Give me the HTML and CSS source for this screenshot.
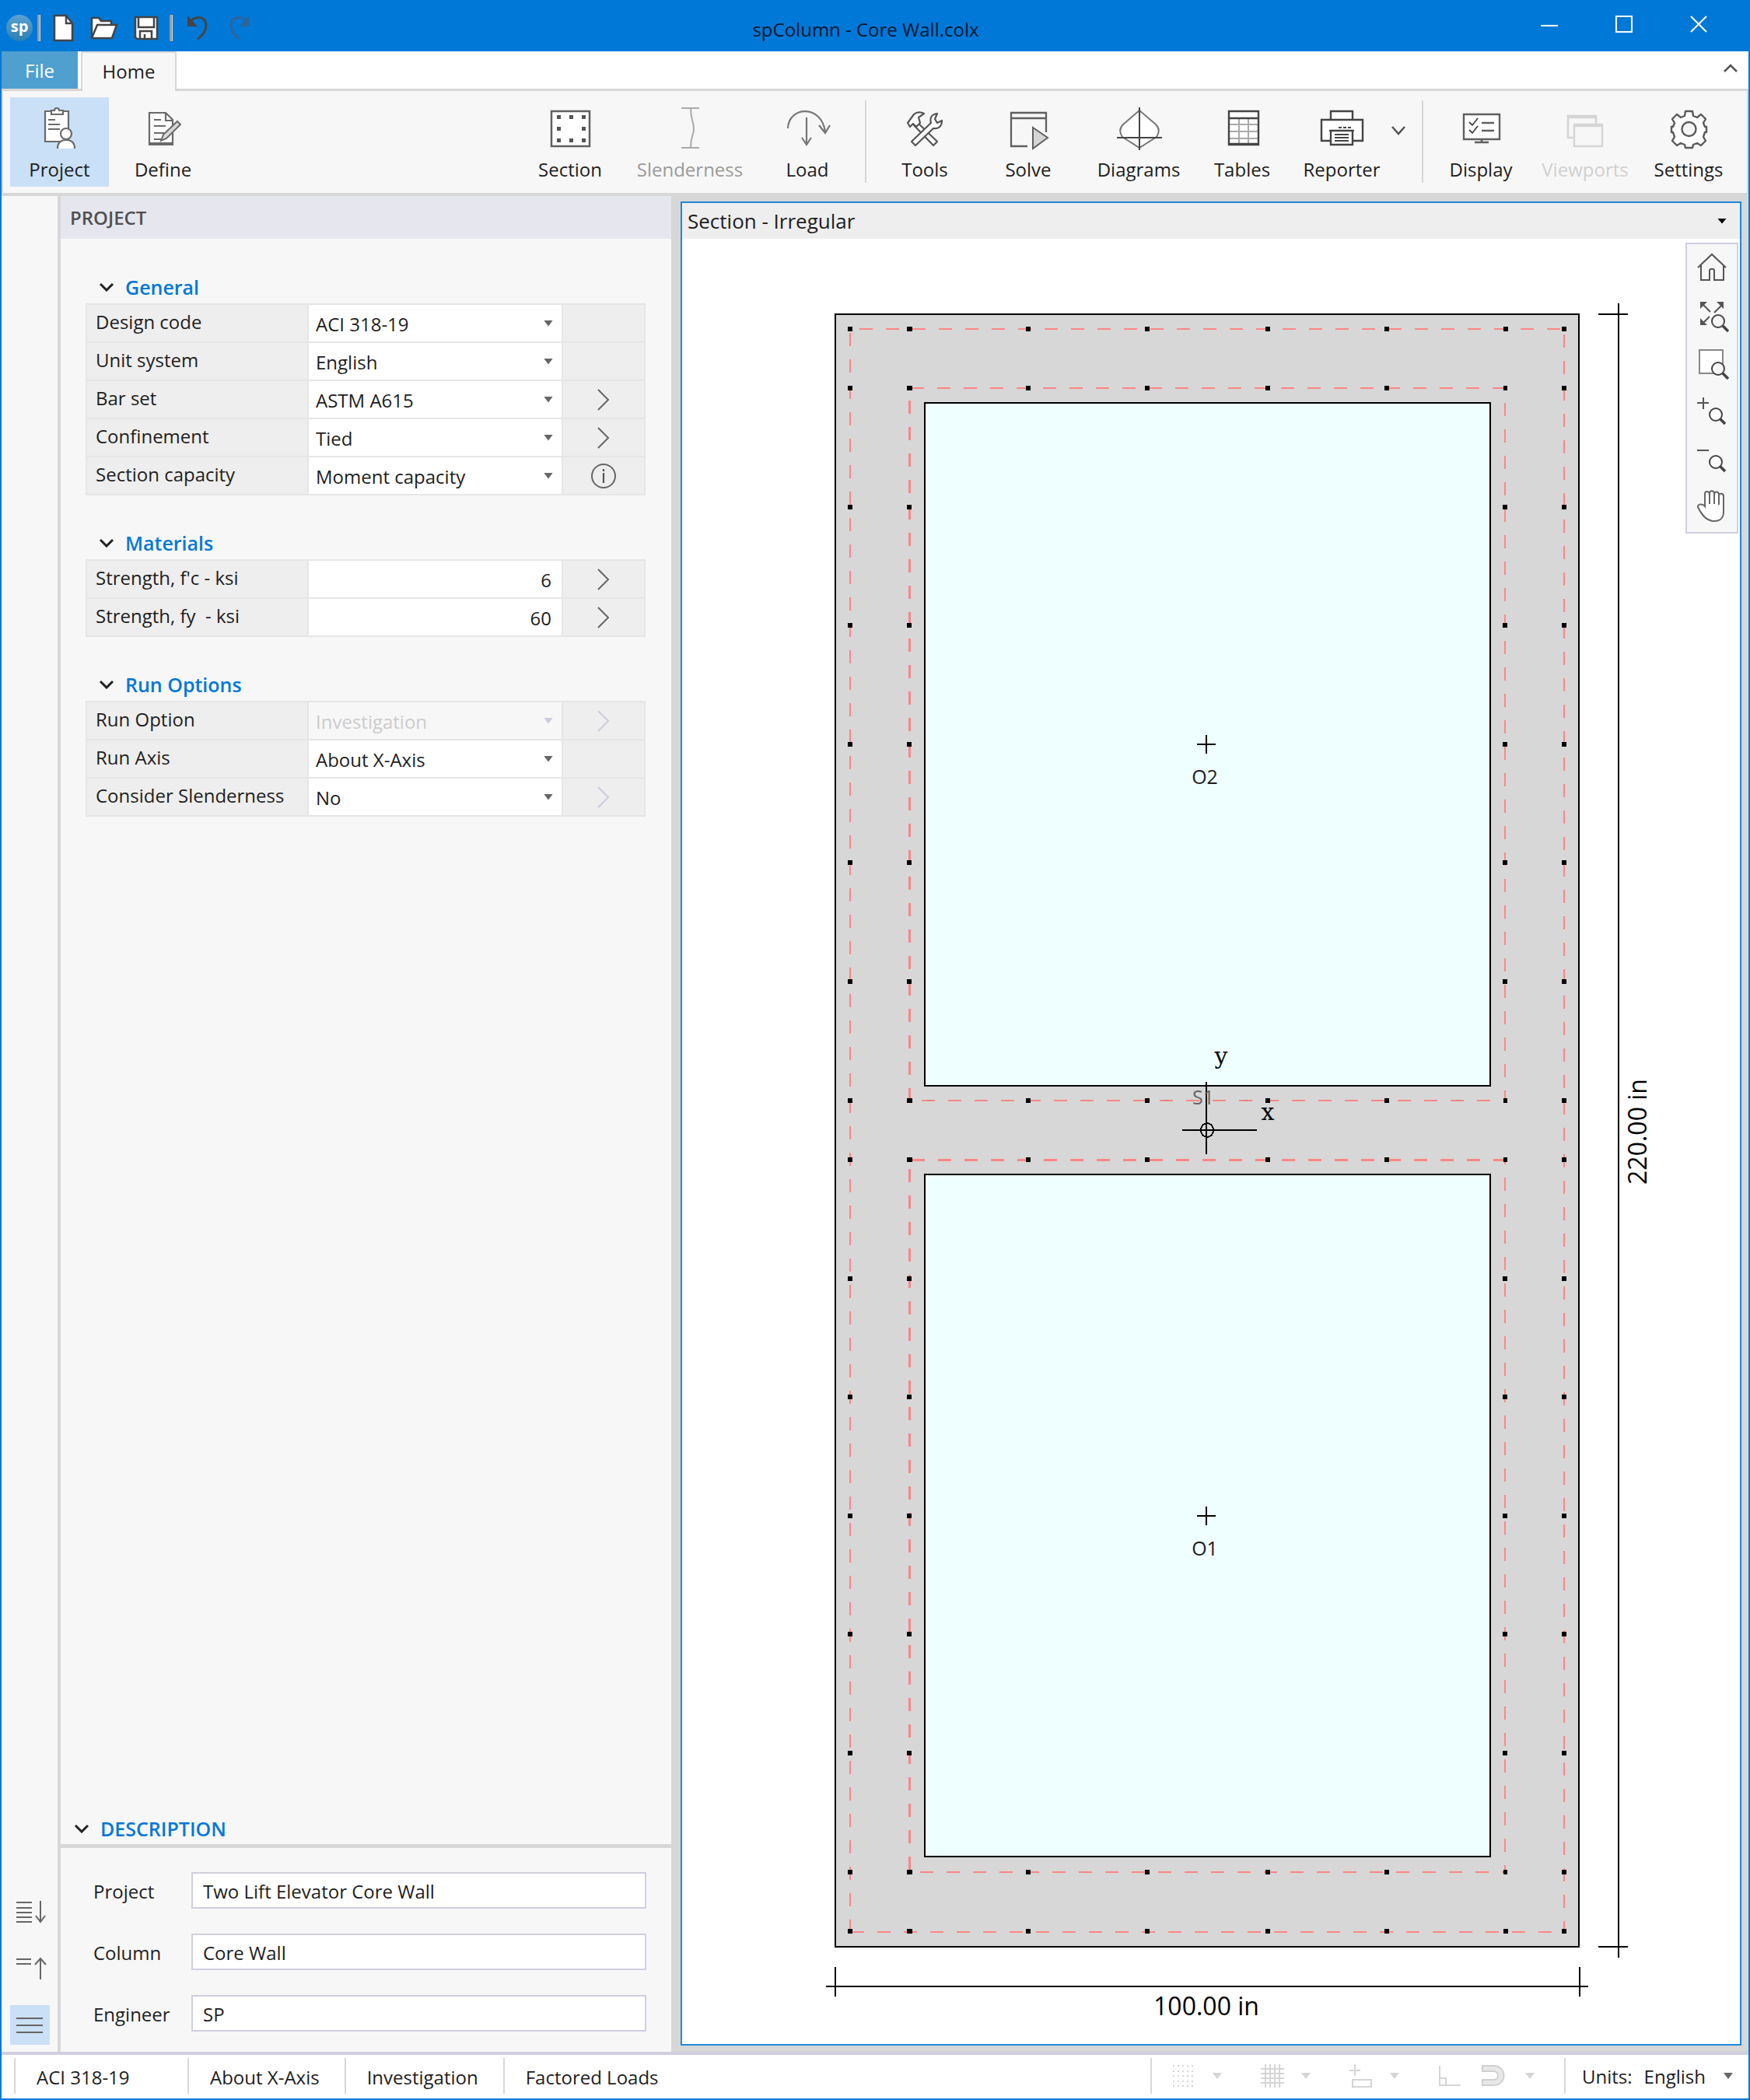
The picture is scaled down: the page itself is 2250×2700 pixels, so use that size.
FILE: index.html
```html
<!DOCTYPE html>
<html lang="en">
<head>
<meta charset="utf-8">
<title>spColumn - Core Wall.colx</title>
<link rel="stylesheet" href="styles.css">
</head>
<body>
<div class="app">
  <header class="titlebar">
    <div class="quick">
      <svg class="logo" width="34" height="34" viewBox="0 0 34 34"><defs><linearGradient id="lg" x1="0" y1="0" x2="0" y2="1"><stop offset="0" stop-color="#5aa2d2"/><stop offset="1" stop-color="#2a7fb4"/></linearGradient></defs><circle cx="17" cy="17" r="17" fill="url(#lg)"/><text x="17" y="22" text-anchor="middle" class="logo-text">sp</text></svg>
      <span class="quick-sep"></span>
      <button class="icon-btn" aria-label="New"><svg width="28" height="36" viewBox="0 0 28 36"><path d="M2 2h15l8 10v22H2z" fill="#fff" stroke="#444" stroke-width="2.5"/><path d="M17 2v10h8" fill="none" stroke="#444" stroke-width="2.5"/></svg></button>
      <button class="icon-btn" aria-label="Open"><svg width="36" height="30" viewBox="0 0 36 30"><path d="M2 28V2h9l3 4h13v5" fill="#fff" stroke="#444" stroke-width="2.5"/><path d="M2 28L9 11h25l-6 17z" fill="#fff" stroke="#444" stroke-width="2.5"/></svg></button>
      <button class="icon-btn" aria-label="Save"><svg width="32" height="32" viewBox="0 0 32 32"><path d="M2 2h28v28H4l-2-2z" fill="#fff" stroke="#444" stroke-width="2.5"/><path d="M6 2v13h20V2M8 30V20h15v10M14 30v-6" fill="none" stroke="#444" stroke-width="2.5"/></svg></button>
      <span class="quick-sep history-sep"></span>
      <button class="icon-btn" aria-label="Undo"><svg width="28" height="34" viewBox="0 0 28 34"><path d="M3 10C12 0 24 2 25 13c0 8-5 14-11 18" fill="none" stroke="#444" stroke-width="3"/><path d="M1 1v14h13z" fill="#444"/></svg></button>
      <button class="icon-btn redo" aria-label="Redo" disabled><svg width="28" height="34" viewBox="0 0 28 34"><path d="M25 10C16 0 4 2 3 13c0 8 5 14 11 18" fill="none" stroke="#2c659a" stroke-width="3"/><path d="M27 1v14H14z" fill="#2c659a"/></svg></button>
    </div>
    <h1 class="app-title">spColumn - Core Wall.colx</h1>
    <div class="window-buttons">
      <button aria-label="Minimize"><svg width="22" height="22" viewBox="0 0 22 22"><path d="M0 13h22" stroke="#fff" stroke-width="2"/></svg></button>
      <button aria-label="Maximize"><svg width="22" height="22" viewBox="0 0 22 22"><path d="M1 1h20v20H1z" fill="none" stroke="#fff" stroke-width="2"/></svg></button>
      <button aria-label="Close"><svg width="22" height="22" viewBox="0 0 22 22"><path d="M1 1l20 20M21 1L1 21" stroke="#fff" stroke-width="2"/></svg></button>
    </div>
  </header>

  <nav class="tabs">
    <button class="tab tab-file">File</button>
    <button class="tab tab-home">Home</button>
    <button class="collapse" aria-label="Collapse ribbon"><svg width="20" height="12" viewBox="0 0 20 12"><path d="M2 10l8-8 8 8" fill="none" stroke="#555" stroke-width="2.5"/></svg></button>
  </nav>

  <div class="ribbon">
    <div class="group group-start">
      <button class="tool active"><svg viewBox="0 0 60 60"><g fill="#fff" stroke="#6a6a6a" stroke-width="2.2"><path d="M11 7h30v39H11z"/><path d="M19 11V6h4c0-4 6-4 6 0h5v5z"/><path d="M15 18h9M15 24h15M15 30h15" /><path d="M27 55c0-8 5-11 11-11s11 3 11 11"/><circle cx="38" cy="36" r="7"/></g></svg><span>Project</span></button>
      <button class="tool"><svg viewBox="0 0 60 60"><path d="M12 9h21l9 9v32H12z" fill="#fff" stroke="#6a6a6a" stroke-width="2.2"/><path d="M33 9v10h9M18 18h9M18 26h15M18 35h13M18 43h9M12 48h30" fill="none" stroke="#6a6a6a" stroke-width="2.2"/><path d="M27 45l3-8 18-17 4 4-18 18z" fill="#d8d8d8" stroke="#6a6a6a" stroke-width="2"/></svg><span>Define</span></button>
    </div>
    <div class="group group-model">
      <button class="tool"><svg viewBox="0 0 60 60"><path d="M6 7h49v45H6z" fill="#fff" stroke="#606060" stroke-width="2.5"/><path d="M13 12h5v5h-5zM29 12h5v5h-5zM45 12h5v5h-5zM13 27h5v5h-5zM45 27h5v5h-5zM13 42h5v5h-5zM29 42h5v5h-5zM45 42h5v5h-5z" fill="#555"/></svg><span>Section</span></button>
      <button class="tool" disabled><svg viewBox="0 0 60 60"><path d="M19 3h23M19 54h23M31 3c0 16 4 16 4 27 0 8-4 8-4 24" fill="none" stroke="#aaa" stroke-width="2"/></svg><span>Slenderness</span></button>
      <button class="tool"><svg viewBox="0 0 60 60"><path d="M5 29C6 0 49-2 53 34M45 25l8 10 6-10M29 15v35M23 41l6 9 6-9" fill="none" stroke="#777" stroke-width="2.2"/></svg><span>Load</span></button>
    </div>
    <div class="group group-run">
      <button class="tool"><svg viewBox="0 0 60 60"><g fill="#fff" stroke="#555" stroke-width="2.2" stroke-linejoin="round"><path d="M20 21l26 25-5 5-25-26z"/><path d="M8 22l8-11c5-4 9-3 13-1l-7 5 2 7-5 5-4-4-4 4z"/><path d="M13 46l25-24c-2-7 1-11 8-12l-3 7 3 5 6-3c0 8-5 11-11 10L18 51z"/></g></svg><span>Tools</span></button>
      <button class="tool"><svg viewBox="0 0 60 60"><path d="M29 52H8V9h45v25M8 16h45" fill="none" stroke="#606060" stroke-width="2.3"/><path d="M36 28l19 13-19 14z" fill="#d5d5d5" stroke="#606060" stroke-width="2"/></svg><span>Solve</span></button>
      <button class="tool"><svg viewBox="0 0 60 60"><path d="M31 6L10 24c-5 5-5 10-1 16l22 14 22-14c4-6 4-11-1-16z" fill="#fff" stroke="#777" stroke-width="2"/><path d="M31 2v55M2 41h58" stroke="#444" stroke-width="2"/></svg><span>Diagrams</span></button>
      <button class="tool"><svg viewBox="0 0 60 60"><path d="M13 7h38v43H13z" fill="#fff"/><path d="M13 24h38M13 33h38M13 42h38M26 16v34M38 16v34" stroke="#aaa" stroke-width="2"/><path d="M13 7h38v43H13zM13 16h38M13 49h38" fill="none" stroke="#444" stroke-width="2.4"/></svg><span>Tables</span></button>
      <button class="tool tool-reporter"><svg viewBox="0 0 60 60"><g fill="#fff" stroke="#444" stroke-width="2.4"><path d="M16 7h28v14H16z"/><path d="M4 18h53v27H4z"/><path d="M16 32h28v18H16z"/></g><path d="M14 32h32M21 37h18M21 41h18M21 45h18" stroke="#444" stroke-width="2.2"/><path d="M26 28h16" stroke="#444" stroke-width="2" stroke-dasharray="4 2"/></svg><span>Reporter</span></button>
      <button class="drop" aria-label="Reporter options"><svg width="20" height="13" viewBox="0 0 20 13"><path d="M2 2l8 9 8-9" fill="none" stroke="#555" stroke-width="2.5"/></svg></button>
    </div>
    <div class="group group-view">
      <button class="tool"><svg viewBox="0 0 60 60"><path d="M8 11h46v32H8z" fill="#fff" stroke="#606060" stroke-width="2.4"/><path d="M31 43v4M22 47h18M31 22h16M31 32h16" stroke="#606060" stroke-width="2.6"/><path d="M15 21l4 4 7-9M15 31l4 4 7-9" fill="none" stroke="#444" stroke-width="1.8"/></svg><span>Display</span></button>
      <button class="tool" disabled><svg viewBox="0 0 60 60"><path d="M17 41H8V13h36v10M8 15h36" fill="none" stroke="#d5d5d5" stroke-width="2.6"/><path d="M16 24h36v28H16zM16 26h36" fill="none" stroke="#d5d5d5" stroke-width="2.4"/></svg><span class="faint">Viewports</span></button>
      <button class="tool"><svg viewBox="0 0 60 60"><path d="M26 7h9l1 6 5 2 5-4 6 6-3 5 2 5 2 0v7l-2 0-2 6 3 5-6 6-5-3-5 2-1 4h-9l-1-4-5-2-5 3-6-6 3-5-2-6-2 0v-7l2 0 2-5-3-5 6-6 5 4 5-2z" fill="#fff" stroke="#5a5a5a" stroke-width="2.4" stroke-linejoin="round"/><circle cx="30.500" cy="30" r="9" fill="#f7f7f7" stroke="#5a5a5a" stroke-width="2.4"/></svg><span>Settings</span></button>
    </div>
  </div>

  <main class="workspace">
    <aside class="rail">
      <button aria-label="Expand all"><svg width="40" height="30" viewBox="0 0 40 30"><path d="M0 3h20M0 10h20M0 16h20M0 22h20M0 28h20" stroke="#666" stroke-width="2"/><path d="M31 1v27M25 20l6 8 6-8" fill="none" stroke="#666" stroke-width="2"/></svg></button>
      <button aria-label="Collapse all"><svg width="40" height="30" viewBox="0 0 40 30"><path d="M0 3h19M0 9h19" stroke="#666" stroke-width="2"/><path d="M31 29V2M24 10l7-8 7 8" fill="none" stroke="#666" stroke-width="2"/></svg></button>
      <button class="active" aria-label="Show all"><svg width="34" height="20" viewBox="0 0 34 20"><path d="M0 1h34M0 10h34M0 19h34" stroke="#666" stroke-width="2"/></svg></button>
    </aside>

    <section class="panel">
      <h2 class="panel-title">PROJECT</h2>
      <div class="panel-body">
        <h3 class="section-title"><svg class="chev" viewBox="0 0 20 12"><path d="M2 2l8 8 8-8"/></svg>General</h3>
        <div class="props">
          <label for="code">Design code</label><div class="pick"><select id="code"><option>ACI 318-19</option></select><i></i></div><span class="cell"></span>
          <label for="units">Unit system</label><div class="pick"><select id="units"><option>English</option></select><i></i></div><span class="cell"></span>
          <label for="bars">Bar set</label><div class="pick"><select id="bars"><option>ASTM A615</option></select><i></i></div><button class="cell" aria-label="Bar set details"><svg class="more" viewBox="0 0 18 30"><path d="M2 2l13 13L2 28"/></svg></button>
          <label for="conf">Confinement</label><div class="pick"><select id="conf"><option>Tied</option></select><i></i></div><button class="cell" aria-label="Confinement details"><svg class="more" viewBox="0 0 18 30"><path d="M2 2l13 13L2 28"/></svg></button>
          <label for="cap">Section capacity</label><div class="pick"><select id="cap"><option>Moment capacity</option></select><i></i></div><button class="cell" aria-label="About section capacity"><svg width="34" height="34" viewBox="0 0 34 34"><circle cx="17" cy="17" r="15" fill="none" stroke="#666" stroke-width="2"/><path d="M17 8v3M17 13v13" stroke="#555" stroke-width="2.2"/></svg></button>
        </div>

        <h3 class="section-title"><svg class="chev" viewBox="0 0 20 12"><path d="M2 2l8 8 8-8"/></svg>Materials</h3>
        <div class="props">
          <label for="fc">Strength, f'c - ksi</label><input id="fc" value="6"><button class="cell" aria-label="Concrete details"><svg class="more" viewBox="0 0 18 30"><path d="M2 2l13 13L2 28"/></svg></button>
          <label for="fy">Strength, fy&nbsp; - ksi</label><input id="fy" value="60"><button class="cell" aria-label="Steel details"><svg class="more" viewBox="0 0 18 30"><path d="M2 2l13 13L2 28"/></svg></button>
        </div>

        <h3 class="section-title"><svg class="chev" viewBox="0 0 20 12"><path d="M2 2l8 8 8-8"/></svg>Run Options</h3>
        <div class="props">
          <label for="run">Run Option</label><div class="pick off"><select id="run" disabled><option>Investigation</option></select><i></i></div><button class="cell" disabled aria-label="Run option details"><svg class="more" viewBox="0 0 18 30"><path d="M2 2l13 13L2 28"/></svg></button>
          <label for="axis">Run Axis</label><div class="pick"><select id="axis"><option>About X-Axis</option></select><i></i></div><span class="cell"></span>
          <label for="slen">Consider Slenderness</label><div class="pick"><select id="slen"><option>No</option></select><i></i></div><button class="cell" disabled aria-label="Slenderness details"><svg class="more" viewBox="0 0 18 30"><path d="M2 2l13 13L2 28"/></svg></button>
        </div>
      </div>
      <h2 class="desc-title"><svg class="chev" viewBox="0 0 20 12"><path d="M2 2l8 8 8-8"/></svg>DESCRIPTION</h2>
      <div class="desc">
        <label for="d-project">Project</label><input id="d-project" value="Two Lift Elevator Core Wall">
        <label for="d-column">Column</label><input id="d-column" value="Core Wall">
        <label for="d-engineer">Engineer</label><input id="d-engineer" value="SP">
      </div>
    </section>

    <section class="viewport">
      <header class="viewport-head"><h2>Section - Irregular</h2><button aria-label="Viewport menu"><i></i></button></header>
      <div class="canvas">
        <svg class="drawing" viewBox="877 307 1360 2321">
          <path d="M1074 404H2030V2503H1074z" fill="#d7d7d7" stroke="#000" stroke-width="2"/>
          <path d="M1189 518H1916V1396H1189zM1189 1510H1916V2387H1189z" fill="#efffff" stroke="#000" stroke-width="2"/>
          <g class="cover">
            <path d="M1105 423H2011"/><path d="M1093 428V2483"/><path d="M2011 430V2483"/><path d="M1094 2484H2011"/>
            <path d="M1171 499H1935"/><path d="M1169 515V1415" stroke-width="3"/><path d="M1935 518V1415"/><path d="M1185 1415H1935"/>
            <path d="M1172 1491H1935" stroke-width="3"/><path d="M1169 1503V2407" stroke-width="3"/><path d="M1935 1491V2407" stroke-dashoffset="11"/><path d="M1183 2407H1935"/>
          </g>
          <g class="rebar">
            <path d="M1090 423H2014" stroke-dasharray="6 70 7 146 6 147 6 149 6 147 6 147 6 69 6"/>
            <path d="M1090 2483H2014" stroke-dasharray="6 70 7 146 6 147 6 149 6 147 6 147 6 69 6"/>
            <path d="M1166 499H1938M1166 1415H1938M1166 1491H1938M1166 2407H1938" stroke-dasharray="7 146 6 147 6 149 6 147 6 147 6 999"/>
            <path d="M1093 496V2410M2011 496V2410" stroke-dasharray="6 147 6 146 6 147 6 146 6 147 6 147 6 70 6 147 6 146 6 147 6 146 6 147 6 147 6 999"/>
            <path d="M1169 649V1265M1935 649V1265M1169 1641V2257M1935 1641V2257" stroke-dasharray="6 146 6 147 6 146 6 147 6 999"/>
          </g>
          <g class="ink">
            <path d="M1539 957h24M1551 945v24M1539 1949h24M1551 1937v24"/>
            <path d="M1551 1391V1484M1520 1453H1616"/><ellipse cx="1552" cy="1453" rx="8" ry="9"/>
            <path d="M2081 390V2517M2055 404H2093M2055 2503H2093"/>
            <path d="M1062 2554H2042M1074 2529V2567M2031 2529V2567"/>
          </g>
          <g class="mark" text-anchor="middle">
            <text x="1549" y="1008">O2</text><text x="1549" y="2000">O1</text>
            <text x="1547" y="1420" fill="#666">S1</text>
          </g>
          <g class="axis" text-anchor="middle"><text x="1570" y="1368">y</text><text x="1630" y="1440">x</text></g>
          <g class="dim" text-anchor="middle"><text x="1551" y="2591">100.00 in</text><text transform="translate(2117 1455) rotate(-90)">220.00 in</text></g>
        </svg>
        <div class="view-tools">
          <button aria-label="Home"><svg viewBox="0 0 44 44"><path d="M4 21L22 4l18 17M8 18v19h11V25c0-3 6-3 6 0v12h12V18" fill="none" stroke="#555" stroke-width="2"/></svg></button>
          <button aria-label="Zoom extents"><svg viewBox="0 0 44 44"><path d="M10 7l10 10M36 7L25 18M9 33l10-10" stroke="#555" stroke-width="2"/><path d="M7 4h9l-9 9zM37 4h-9l9 9zM7 34v-9l9 9z" fill="#555"/><circle cx="30" cy="29" r="8" fill="#f7f7f7" stroke="#444" stroke-width="2"/><path d="M36 35l7 7" stroke="#444" stroke-width="3.500"/></svg></button>
          <button aria-label="Zoom window"><svg viewBox="0 0 44 44"><path d="M6 5h30v30H6z" fill="#fff" stroke="#888" stroke-width="2"/><circle cx="30" cy="29" r="8" fill="#f7f7f7" stroke="#444" stroke-width="2"/><path d="M36 35l7 7" stroke="#444" stroke-width="3.500"/></svg></button>
          <button aria-label="Zoom in"><svg viewBox="0 0 44 44"><path d="M3 12h15M11 5v15" stroke="#555" stroke-width="2"/><circle cx="27" cy="27" r="8" fill="#fff" stroke="#444" stroke-width="2"/><path d="M32 32l7 7" stroke="#444" stroke-width="3.500"/></svg></button>
          <button aria-label="Zoom out"><svg viewBox="0 0 44 44"><path d="M3 12h15" stroke="#555" stroke-width="2"/><circle cx="27" cy="27" r="8" fill="#fff" stroke="#444" stroke-width="2"/><path d="M32 32l7 7" stroke="#444" stroke-width="3.500"/></svg></button>
          <button aria-label="Pan"><svg viewBox="0 0 44 44"><path d="M13 23V7c0-4 5-4 6 0 0-5 6-5 6 0 1-4 6-3 6 1 1-2 6-2 6 2v20c0 8-5 12-12 12-9 0-15-6-21-18-1-4 6-5 9-1z" fill="#fff" stroke="#666" stroke-width="2"/><path d="M19 6v14M25 6v14M31 8v13" stroke="#666" stroke-width="2"/></svg></button>
        </div>
      </div>
    </section>
  </main>

  <footer class="status">
    <span class="seg seg-code">ACI 318-19</span><span class="seg">About X-Axis</span><span class="seg">Investigation</span><span class="seg">Factored Loads</span>
    <div class="snap">
      <button disabled aria-label="Grid points"><svg viewBox="0 0 30 30"><path d="M1 2h28M1 9h28M1 15h28M1 22h28M1 28h28" stroke="#d5d5d5" stroke-width="2" stroke-dasharray="2 4"/></svg><i></i></button>
      <button disabled aria-label="Grid lines"><svg viewBox="0 0 30 30"><path d="M0 6h30M0 12h30M0 18h30M0 24h30M6 0v30M12 0v30M18 0v30M24 0v30" stroke="#d5d5d5" stroke-width="2"/></svg><i></i></button>
      <button disabled aria-label="Add shape"><svg viewBox="0 0 30 30"><path d="M0 8h14M7 0v15M4 20h24v9H4z" fill="none" stroke="#d5d5d5" stroke-width="2"/></svg><i></i></button>
      <button disabled class="snap-pair" aria-label="Ortho and snap"><svg viewBox="0 0 30 30"><path d="M2 2v25h27M2 18h8v9" fill="none" stroke="#d5d5d5" stroke-width="2"/></svg><svg viewBox="0 0 30 30"><path d="M1 2h14c18 0 18 25 0 25H1v-7h14c8 0 8-11 0-11H1z" fill="#e8e8e8" stroke="#d0d0d0" stroke-width="2"/></svg><i></i></button>
    </div>
    <div class="unit-pick"><label for="status-units">Units:</label><div class="pick"><select id="status-units"><option>English</option></select><i></i></div></div>
  </footer>
</div>
</body>
</html>
```
FILE: styles.css
```css
* { box-sizing: border-box; }
body {
  margin: 0;
  font: 24px/32px "Open Sans", "Noto Sans", sans-serif;
  color: #1e1e1e;
  background: #fff;
}
h1, h2, h3 { margin: 0; font-size: 24px; font-weight: 400; }
button, input, select { font: inherit; color: inherit; border: 0; padding: 0; margin: 0; background: none; border-radius: 0; }
svg { display: block; flex: none; }

.app {
  display: flex;
  flex-direction: column;
  min-height: 100vh;
  border: solid #0078d7;
  border-width: 0 2px 2px;
}

/* Title bar */
.titlebar {
  display: grid;
  grid-template-columns: 1fr auto 1fr;
  align-items: center;
  height: 66px;
  padding: 6px 16px 0 6px;
  background: #0078d7;
}
.quick { display: flex; align-items: center; gap: 20px; }
.quick-sep { width: 4px; height: 34px; background: #9a9a9a; border-right: 1px solid #d8d8d8; margin: 0 -4px 0 -14px; }
.history-sep { margin: 0 -2px 0 -6px; }
.redo { margin-left: 6px; }
.logo-text { font: 700 20px "Open Sans", sans-serif; fill: #fff; }
.app-title { color: #001830; padding: 4px 14px 0 0; }
.window-buttons { display: flex; justify-content: flex-end; padding-bottom: 10px; }
.window-buttons button { width: 96px; display: flex; justify-content: center; }

/* Tabs */
.tabs { display: flex; height: 51px; border-bottom: 3px solid #d7d7d7; }
.tab { height: 48px; padding-top: 2px; }
.tab-file { width: 98px; color: #fff; background: #4f9fcf; margin-right: 4px; }
.tab-home { width: 123px; height: 51px; padding-bottom: 3px; background: #f7f7f7; border: solid #d7d7d7; border-width: 2px 2px 0; }
.collapse { margin-left: auto; padding: 0 13px 4px; }

/* Ribbon */
.ribbon {
  display: flex;
  height: 135px;
  padding: 8px 2px 8px 9px;
  background: #f7f7f7;
  border: solid #d7d7d7;
  border-width: 0 2px 4px;
}
.group { display: grid; }
.group-start { grid-template-columns: 127px 127px; gap: 6px; }
.group-model { grid-template-columns: 154px 154px 148px; margin-left: auto; }
.group-run { grid-template-columns: 150px 116px 168px 98px 158px 24px; }
.group-view { grid-template-columns: 148px 120px 146px; }
.group-run, .group-view { position: relative; border-left: 2px solid transparent; }
.group-run::before, .group-view::before { content: ""; position: absolute; left: -2px; top: 4px; bottom: 5px; width: 2px; background: #d7d7d7; }
.tool { display: flex; flex-direction: column; align-items: center; gap: 6px; padding: 11px 0 6px; height: 115px; white-space: nowrap; }
.tool svg { width: 60px; height: 60px; }
.tool.active { background: #c9e0f7; }
.tool:disabled { color: #9a9a9a; }
.tool .faint { color: #d0d0d0; }
.tool-reporter { margin: 0 14px; }
.drop { display: flex; align-items: center; justify-content: flex-end; margin: 0 20px 30px -20px; }

/* Workspace */
.workspace { flex: 1; display: flex; background: #d7d7d7; }
.rail { width: 72px; display: flex; flex-direction: column; align-items: flex-start; justify-content: flex-end; gap: 22px; padding: 0 0 9px 11px; background: #f7f7f7; }
.rail button { width: 51px; height: 51px; display: flex; align-items: center; justify-content: flex-start; padding-left: 8px; }
.rail .active { background: #c9e0f7; }

.panel { width: 785px; margin: 0 12px 0 4px; display: flex; flex-direction: column; background: #f7f7f7; }
.panel-title { height: 55px; padding: 12px; color: #505050; background: #e6e6ef; font-weight: 600; }
.panel-body { flex: 1; padding: 0 33px 0 32px; }
.section-title { display: flex; align-items: center; gap: 14px; height: 42px; margin-top: 40px; padding-left: 17px; color: #0078d7; font-size: 25px; font-weight: 600; }
.section-title:first-child { margin-top: 41px; }
.chev { width: 20px; height: 12px; }
.chev path { fill: none; stroke: #222; stroke-width: 3; }
.props { display: grid; grid-template-columns: 283px 1fr 104px; grid-auto-rows: 47px; gap: 2px; padding: 2px; background: #e6e6e6; }
.props > label { padding: 6px 0 0 11px; background: #eee; white-space: nowrap; }
.props > input { min-width: 0; padding: 2px 13px 0 0; text-align: right; background: #fff; }
.cell { display: flex; align-items: center; justify-content: center; background: #eee; }
.more { width: 18px; height: 30px; }
.more path { fill: none; stroke: #666; stroke-width: 2; }
.cell:disabled .more path { stroke: #ccd; }

.pick { display: grid; align-items: center; background: #fff; }
.pick > * { grid-area: 1 / 1; }
.pick select { width: 100%; height: 100%; padding: 2px 30px 0 9px; appearance: none; opacity: 1; }
.pick i, .snap i { width: 12px; height: 8px; background: #666; clip-path: polygon(0 0, 100% 0, 50% 100%); pointer-events: none; }
.pick i { justify-self: end; margin-right: 11px; }
.pick.off { background: #f7f7f7; color: #ccc; }
.pick.off i { background: #ccd; }

.desc-title { display: flex; align-items: center; gap: 14px; height: 52px; padding: 6px 0 0 17px; color: #0078d7; font-size: 25px; font-weight: 600; border-bottom: 5px solid #d7d7d7; }
.desc { display: grid; grid-template-columns: 126px 1fr; grid-auto-rows: 47px; align-items: center; gap: 32px 0; padding: 31px 32px 26px 42px; }
.desc input { height: 47px; min-width: 0; padding: 2px 13px 0; background: #fff; border: 2px solid #d0cfe1; }
.desc label { padding-top: 2px; }

/* Viewport */
.viewport { flex: 1; min-width: 0; display: flex; flex-direction: column; margin: 7px 9px 8px 0; background: #fff; border: 2px solid #1e88d8; }
.viewport-head { display: flex; justify-content: space-between; align-items: center; height: 46px; padding: 0 17px 0 7px; background: #eee; }
.viewport-head h2 { font-size: 26px; }
.viewport-head i { display: block; width: 12px; height: 7px; background: #000; clip-path: polygon(0 0, 100% 0, 50% 100%); }
.canvas { position: relative; flex: 1; }
.drawing { width: 100%; height: auto; shape-rendering: crispEdges; }
.cover { fill: none; stroke: #ff8585; stroke-width: 2; stroke-dasharray: 17 17; }
.rebar { fill: none; stroke: #000; stroke-width: 6; }
.ink { fill: none; stroke: #000; stroke-width: 2; }
.mark { font-size: 25px; fill: #1e1e1e; }
.axis { font: 30px "DejaVu Serif", serif; fill: #000; }
.dim { font-size: 32px; }
.view-tools { position: absolute; top: 5px; right: 2px; width: 68px; display: grid; grid-auto-rows: 61px; padding: 2px 0; background: #f7f7f7; border: 2px solid #d0cfe1; }
.view-tools button { display: flex; align-items: center; justify-content: center; padding-bottom: 4px; }
.view-tools svg { width: 44px; height: 44px; }

/* Status bar */
.status { display: flex; align-items: center; height: 60px; padding: 0 0 2px 16px; border-top: 4px solid #d0cfe1; background: #fff; }
.seg { height: 46px; padding: 9px 32px 0 27px; border-left: 2px solid #d7d7d7; white-space: nowrap; }
.seg-code { width: 223px; }
.snap { display: flex; align-items: center; gap: 50px; height: 46px; margin-left: auto; padding: 0 38px 0 26px; border: solid #d7d7d7; border-width: 0 2px; }
.snap button { display: flex; align-items: center; gap: 22px; }
.snap .snap-pair { gap: 26px; }
.snap svg { width: 30px; height: 30px; }
.snap i { background: #d5d5d5; }
.unit-pick { display: flex; align-items: center; width: 235px; padding-left: 21px; }
.unit-pick label { padding-top: 2px; }
.unit-pick .pick { flex: 1; margin-left: 6px; }
.unit-pick .pick i { margin-right: 20px; }
```
